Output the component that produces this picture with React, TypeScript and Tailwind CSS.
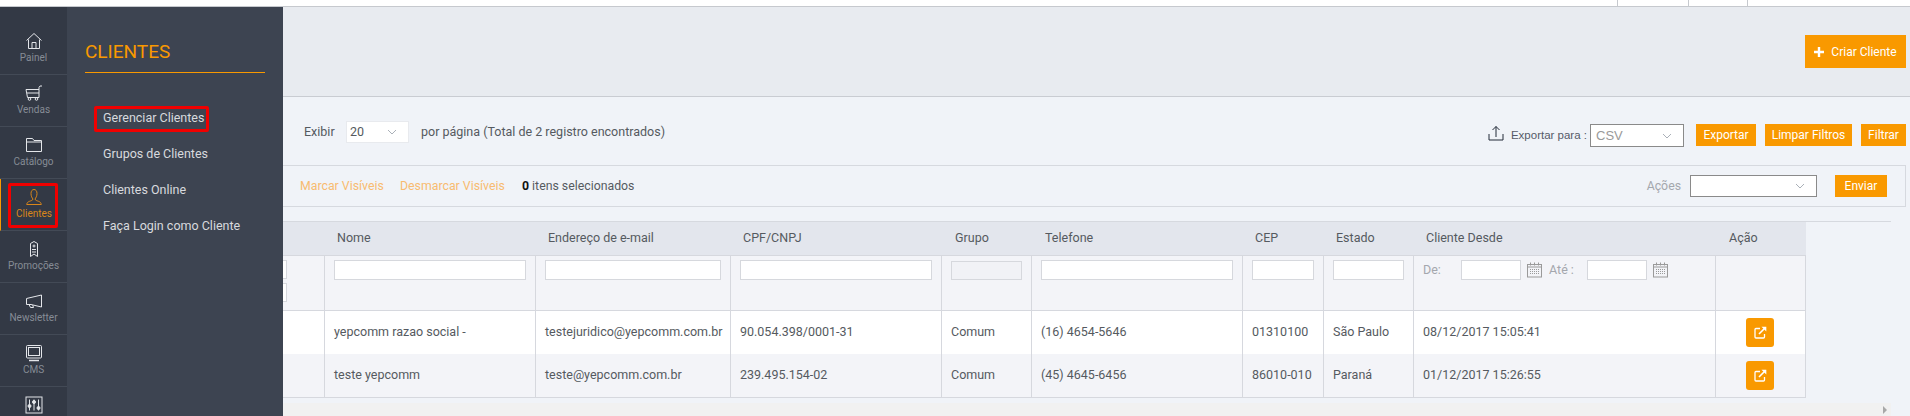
import React from "react";

const Svg = ({ children, w = 18, h = 18, className = "" }: { children: React.ReactNode; w?: number; h?: number; className?: string }) => (
  <svg width={w} height={h} viewBox={`0 0 ${w} ${h}`} fill="none" stroke="currentColor" strokeWidth="1" className={className}>
    {children}
  </svg>
);

const icons: Record<string, React.ReactNode> = {
  home: (
    <Svg>
      <path d="M1.500 8.500 9 1.500l7.500 7M3.500 7.500v9h11v-9M7 16.500v-6h4v6" />
    </Svg>
  ),
  cart: (
    <Svg>
      <path d="M1 5.500h13v8H2.500zM2 9h12M14 5.500V3.500l1-1.500h2" />
      <circle cx="4.500" cy="15" r="1.300" />
      <circle cx="11.500" cy="15" r="1.300" />
    </Svg>
  ),
  folder: (
    <Svg>
      <path d="M1.500 15.500v-13h6l1.500 2h7.500v11zM1.500 6h15" />
    </Svg>
  ),
  user: (
    <Svg>
      <path d="M6 5.500C6 3 7.200 1.500 9 1.500s3 1.500 3 4-1.200 4.500-2 5.500c.3 1.500 2 1.700 3.500 2.300s2.500 1.200 2.800 3.200H1.700c.3-2 1.300-2.600 2.800-3.200S7.700 12.500 8 11C7 10 6 8 6 5.500Z" />
    </Svg>
  ),
  promo: (
    <Svg>
      <path d="M5.500 16.500v-13L9 1.500l3.500 2v13L9 14z" />
      <circle cx="9" cy="6" r="1" />
      <path d="M7 9.500h4M7 12h4" />
    </Svg>
  ),
  megaphone: (
    <Svg>
      <path d="M16.500 3v12L6 12.500H1.500v-6l15-3.500ZM4 12.500 5.500 15.500h3l-.8-2.400" />
    </Svg>
  ),
  monitor: (
    <Svg>
      <rect x="1.500" y="1.500" width="15" height="12.500" rx="1" />
      <rect x="3.500" y="3.500" width="11" height="8" />
      <path d="M4 16.500h10" strokeWidth="1.500" />
    </Svg>
  ),
  sliders: (
    <Svg>
      <rect x="1" y="1" width="16" height="16" />
      <path d="M4.500 3.500v11M9 3.500v11M13.500 3.500v11" />
      <circle cx="4.500" cy="10" r="1.500" fill="currentColor" />
      <circle cx="9" cy="6" r="1.500" fill="currentColor" />
      <circle cx="13.500" cy="12" r="1.500" fill="currentColor" />
    </Svg>
  ),
};

const nav = [
  { label: "Painel", icon: "home" },
  { label: "Vendas", icon: "cart" },
  { label: "Catálogo", icon: "folder" },
  { label: "Clientes", icon: "user" },
  { label: "Promoções", icon: "promo" },
  { label: "Newsletter", icon: "megaphone" },
  { label: "CMS", icon: "monitor" },
  { label: "", icon: "sliders" },
];

const Chevron = ({ className = "" }: { className?: string }) => (
  <svg width="10" height="6" viewBox="0 0 10 6" fill="none" stroke="#aab0b8" strokeWidth="1" className={className}>
    <path d="M1 1l4 4 4-4" />
  </svg>
);

const Calendar = () => (
  <svg width="15" height="16" viewBox="0 0 15 16" fill="none" stroke="#9a9a9a" strokeWidth="1" className="shrink-0">
    <rect x="0.500" y="2.500" width="14" height="12.500" />
    <path d="M3.500 0.500v3M7.500 0.500v3M11.500 0.500v3M0.500 5h14" />
    <path d="M3 7.500h9M3 9.500h9M3 11.500h9" strokeDasharray="1 1" />
  </svg>
);

const ExternalLink = () => (
  <svg width="13" height="13" viewBox="0 0 13 13" fill="none" stroke="#fff" strokeWidth="1.300">
    <path d="M6 2.500H2a1 1 0 0 0-1 1v7.500a1 1 0 0 0 1 1h7.500a1 1 0 0 0 1-1V8" />
    <path d="M5 8l6-6" strokeWidth="1.600" />
    <path d="M7.500 0.800h4.800v4.800z" fill="#fff" stroke="none" />
  </svg>
);

const OrangeBtn = ({ children, className = "" }: { children: React.ReactNode; className?: string }) => (
  <div className={`bg-[#f99900] text-white text-[12px] flex items-center justify-center ${className}`}>{children}</div>
);

const FilterInput = ({ className = "" }: { className?: string }) => (
  <div className={`h-[20px] bg-white border border-[#d6d8dd] ${className}`} />
);

const cellR = "border-r border-b border-[#d6d8de] align-top";
const cellMid = "border-r border-b border-[#d6d8de] align-middle text-[12.500px] text-[#555a60] pl-[9px] whitespace-nowrap";

const rows = [
  {
    bg: "bg-white",
    nome: "yepcomm razao social -",
    email: "testejuridico@yepcomm.com.br",
    cpf: "90.054.398/0001-31",
    tel: "(16) 4654-5646",
    cep: "01310100",
    estado: "São Paulo",
    desde: "08/12/2017 15:05:41",
    h: "h-[43px]",
    b: "border-b-0",
  },
  {
    bg: "bg-[#f3f4f8]",
    nome: "teste yepcomm",
    email: "teste@yepcomm.com.br",
    cpf: "239.495.154-02",
    tel: "(45) 4645-6456",
    cep: "86010-010",
    estado: "Paraná",
    desde: "01/12/2017 15:26:55",
    h: "h-[44px]",
    b: "",
  },
];

const headers: [string, string][] = [
  ["", "pl-0"],
  ["Nome", "pl-[12px]"],
  ["Endereço de e-mail", "pl-[12px]"],
  ["CPF/CNPJ", "pl-[12px]"],
  ["Grupo", "pl-[13px]"],
  ["Telefone", "pl-[13px]"],
  ["CEP", "pl-[12px]"],
  ["Estado", "pl-[12px]"],
  ["Cliente Desde", "pl-[12px]"],
  ["Ação", "pl-[13px]"],
];

export default function App() {
  return (
    <div className="w-[1910px] h-[416px] overflow-hidden flex flex-col bg-white font-['Roboto',sans-serif]">
      <div className="h-[7px] shrink-0 border-b border-[#c6c9ce] flex">
        <div className="w-[1617px]" />
        <div className="w-[71px] border-l border-[#c6c9ce]" />
        <div className="w-[59px] border-l border-[#c6c9ce]" />
        <div className="border-l border-[#c6c9ce]" />
      </div>
      <div className="flex flex-1 min-h-0">
        <nav className="w-[67px] shrink-0 bg-[#333945] pt-[16px] overflow-hidden">
          {nav.map((n) => {
            const active = n.label === "Clientes";
            return (
              <div
                key={n.icon}
                className={`h-[52px] border-b border-[#434a56] flex flex-col items-center pt-[9px] ${
                  active ? "relative border-l border-l-[#f99900] text-[#d9861a]" : "text-[#e4e6ea]"
                }`}
              >
                {active && <div className="absolute left-[7px] top-[4px] w-[50px] h-[45px] border-[3px] border-[#f00000] rounded-[2px]" />}
                {icons[n.icon]}
                <span className={`text-[10px] leading-[12px] mt-[2px] ${active ? "text-[#d9861a]" : "text-[#868c95]"}`}>{n.label}</span>
              </div>
            );
          })}
        </nav>
        <aside className="w-[216px] shrink-0 bg-[#3d4451] px-[18px] pt-[33px]">
          <div className="text-[19px] leading-[24px] text-[#f99900] pb-[8px] border-b border-[#f99900]">CLIENTES</div>
          <ul className="mt-[27px] pl-[18px] text-[12.500px] text-[#d8dade]">
            <li className="h-[36px] leading-[36px] relative whitespace-nowrap">
              Gerenciar Clientes
              <div className="absolute left-[-9px] top-[6px] w-[115px] h-[26px] border-[3px] border-[#f00000] rounded-[2px]" />
            </li>
            <li className="h-[36px] leading-[36px] whitespace-nowrap">Grupos de Clientes</li>
            <li className="h-[36px] leading-[36px] whitespace-nowrap">Clientes Online</li>
            <li className="h-[36px] leading-[36px] whitespace-nowrap">Faça Login como Cliente</li>
          </ul>
        </aside>
        <main className="flex-1 min-w-0 bg-[#f0f3f8] flex flex-col">
          <div className="h-[90px] shrink-0 bg-[#e8ebf0] border-b border-[#c9ccd2] flex items-center justify-end pr-[4px]">
            <OrangeBtn className="w-[101px] h-[33px] gap-[7px]">
              <svg width="10" height="10" viewBox="0 0 10 10" fill="#fff">
                <path d="M3.800 0h2.400v3.800H10v2.400H6.200V10H3.800V6.200H0V3.800h3.800z" />
              </svg>
              Criar Cliente
            </OrangeBtn>
          </div>
          <div className="h-[68px] shrink-0 flex justify-between pl-[21px] pr-[4px]">
            <div className="flex items-start pt-[24px] text-[12.500px] text-[#555a60]">
              <span className="leading-[22px] w-[42px]">Exibir</span>
              <div className="w-[63px] h-[22px] bg-white border border-[#e8eaee] flex items-center justify-between pl-[3px] pr-[11px]">
                20
                <Chevron />
              </div>
              <span className="leading-[22px] ml-[12px]">por página (Total de 2 registro encontrados)</span>
            </div>
            <div className="flex items-start pt-[27px]">
              <svg width="16" height="16" viewBox="0 0 16 16" fill="none" stroke="#222a38" strokeWidth="1" className="mt-[1px] mr-[7px]">
                <path d="M1 9v6h14V9M8 12V1.500M4.500 5 8 1.500 11.500 5" />
              </svg>
              <span className="text-[11.500px] leading-[22px] text-[#555a68] font-['Liberation_Sans',sans-serif] whitespace-nowrap">Exportar para :</span>
              <div className="w-[94px] h-[23px] ml-[3px] bg-white border border-[#8a8a8a] flex items-center justify-between pl-[5px] pr-[11px] text-[13px] text-[#9a9a9a] font-['Liberation_Sans',sans-serif]">
                CSV
                <Chevron />
              </div>
              <OrangeBtn className="w-[60px] h-[22px] ml-[12px]">Exportar</OrangeBtn>
              <OrangeBtn className="w-[87px] h-[22px] ml-[9px]">Limpar Filtros</OrangeBtn>
              <OrangeBtn className="w-[45px] h-[22px] ml-[9px]">Filtrar</OrangeBtn>
            </div>
          </div>
          <div className="h-[42px] shrink-0 mr-[4px] border border-[#d6d9df] border-l-0 flex items-center justify-between pl-[17px] text-[12.300px]">
            <div className="flex whitespace-nowrap">
              <span className="text-[#f8bb70] w-[100px]">Marcar Visíveis</span>
              <span className="text-[#f8bb70] w-[122px]">Desmarcar Visíveis</span>
              <span className="text-[#555a60]">
                <b className="text-[#111] font-bold">0</b> itens selecionados
              </span>
            </div>
            <div className="flex items-center pr-[18px]">
              <span className="text-[#a4a7ad] mr-[9px]">Ações</span>
              <div className="w-[127px] h-[22px] bg-white border border-[#8a8a8a] flex items-center justify-end pr-[11px]">
                <Chevron />
              </div>
              <OrangeBtn className="w-[52px] h-[22px] ml-[18px]">Enviar</OrangeBtn>
            </div>
          </div>
          <div className="mt-[14px] w-[1608px] border-t border-[#d6d9df]">
            <table className="table-fixed border-separate border-spacing-0 w-[1523px]">
              <colgroup>
                <col className="w-[42px]" />
                <col className="w-[211px]" />
                <col className="w-[195px]" />
                <col className="w-[211px]" />
                <col className="w-[90px]" />
                <col className="w-[211px]" />
                <col className="w-[81px]" />
                <col className="w-[90px]" />
                <col className="w-[302px]" />
                <col className="w-[90px]" />
              </colgroup>
              <thead>
                <tr className="h-[34px] bg-[#e3e6ed]">
                  {headers.map(([t, p], i) => (
                    <th key={i} className={`border-b border-[#d6d8de] text-left text-[12.500px] font-normal text-[#555a60] ${p}`}>
                      {t}
                    </th>
                  ))}
                </tr>
                <tr className="h-[55px] bg-[#f3f4f8]">
                  <td className={cellR}>
                    <div className="mt-[4px] w-[4px] h-[19px] bg-white border border-l-0 border-[#d6d8dd]" />
                    <div className="mt-[4px] w-[4px] h-[19px] bg-white border border-l-0 border-[#d6d8dd]" />
                  </td>
                  <td className={`${cellR} pt-[4px] pl-[9px]`}><FilterInput className="w-[192px]" /></td>
                  <td className={`${cellR} pt-[4px] pl-[9px]`}><FilterInput className="w-[176px]" /></td>
                  <td className={`${cellR} pt-[4px] pl-[9px]`}><FilterInput className="w-[192px]" /></td>
                  <td className={`${cellR} pt-[5px] pl-[9px]`}><div className="h-[19px] w-[71px] bg-[#f1f2f6] border border-[#d6d8dd]" /></td>
                  <td className={`${cellR} pt-[4px] pl-[9px]`}><FilterInput className="w-[192px]" /></td>
                  <td className={`${cellR} pt-[4px] pl-[9px]`}><FilterInput className="w-[62px]" /></td>
                  <td className={`${cellR} pt-[4px] pl-[9px]`}><FilterInput className="w-[71px]" /></td>
                  <td className={`${cellR} pt-[4px] pl-[9px]`}>
                    <div className="flex items-center text-[12.500px] text-[#a4a7ad] h-[20px]">
                      <span className="w-[38px]">De:</span>
                      <FilterInput className="w-[60px]" />
                      <span className="ml-[6px] flex"><Calendar /></span>
                      <span className="ml-[7px] w-[38px] whitespace-nowrap">Até :</span>
                      <FilterInput className="w-[60px]" />
                      <span className="ml-[6px] flex"><Calendar /></span>
                    </div>
                  </td>
                  <td className={cellR} />
                </tr>
              </thead>
              <tbody>
                {rows.map((r) => (
                  <tr key={r.email} className={`${r.h} ${r.bg}`}>
                    <td className={`${cellMid} ${r.b}`} />
                    <td className={`${cellMid} ${r.b}`}>{r.nome}</td>
                    <td className={`${cellMid} ${r.b}`}>{r.email}</td>
                    <td className={`${cellMid} ${r.b}`}>{r.cpf}</td>
                    <td className={`${cellMid} ${r.b}`}>Comum</td>
                    <td className={`${cellMid} ${r.b}`}>{r.tel}</td>
                    <td className={`${cellMid} ${r.b}`}>{r.cep}</td>
                    <td className={`${cellMid} ${r.b}`}>{r.estado}</td>
                    <td className={`${cellMid} ${r.b}`}>{r.desde}</td>
                    <td className={`${cellMid} ${r.b} !pl-[30px]`}>
                      <div className="w-[28px] h-[29px] bg-[#f99900] rounded-[3px] flex items-center justify-center">
                        <ExternalLink />
                      </div>
                    </td>
                  </tr>
                ))}
              </tbody>
            </table>
            <div className="h-[5px]" />
            <div className="h-[13px] bg-[#f1f1f1] flex items-center justify-end pr-[4px]">
              <div className="w-0 h-0 border-y-[4px] border-y-transparent border-l-[4px] border-l-[#a8a8a8]" />
            </div>
          </div>
        </main>
      </div>
    </div>
  );
}
